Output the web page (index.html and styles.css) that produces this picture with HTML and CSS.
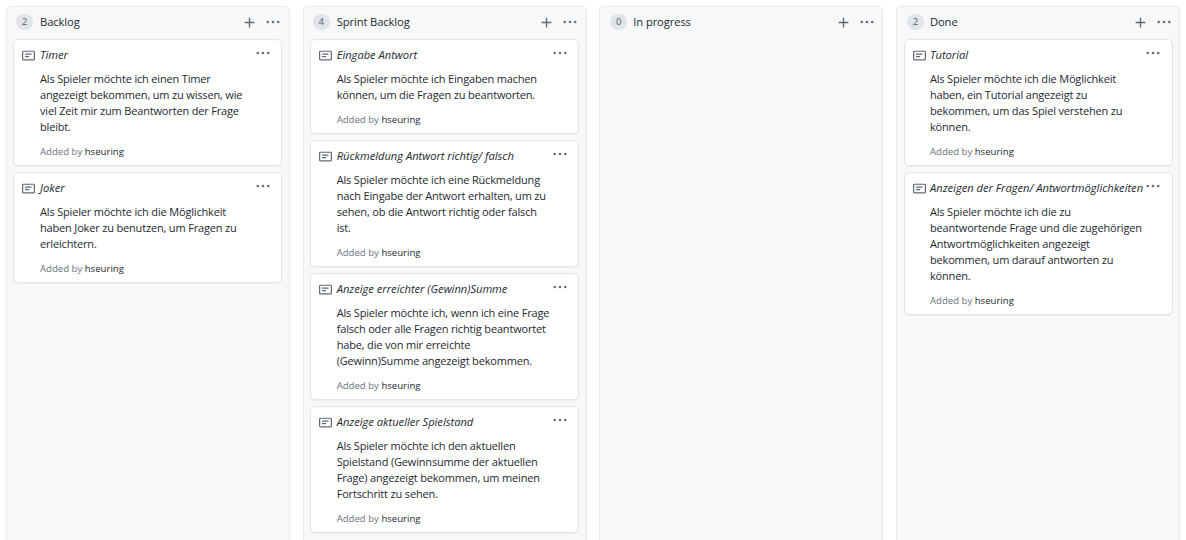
FILE: index.html
```
<!DOCTYPE html>
<html lang="de">
<head>
<meta charset="utf-8">
<title>Project board</title>
<link rel="stylesheet" href="styles.css">
</head>
<body>
<svg class="defs" aria-hidden="true">
  <symbol id="note" viewBox="0 0 16 16"><path fill-rule="evenodd" d="M0 3.75C0 2.784.784 2 1.75 2h12.5c.966 0 1.75.784 1.75 1.75v8.5A1.75 1.75 0 0 1 14.25 14H1.75A1.75 1.75 0 0 1 0 12.250v-8.500zm1.750-.250a.250.250 0 0 0-.250.250v8.500c0 .138.112.250.250.250h12.500a.250.250 0 0 0 .250-.250v-8.500a.250.250 0 0 0-.250-.250H1.750zM3.500 6.250a.750.750 0 0 1 .750-.750h7a.750.750 0 0 1 0 1.500h-7a.750.750 0 0 1-.750-.750zm.750 2.250a.750.750 0 0 0 0 1.500h4a.750.750 0 0 0 0-1.500h-4z"/></symbol>
  <symbol id="dots" viewBox="0 0 16 16"><circle cx="2" cy="8" r="1.400"/><circle cx="8" cy="8" r="1.400"/><circle cx="14" cy="8" r="1.400"/></symbol>
  <symbol id="plus" viewBox="0 0 16 16"><path d="M7.150 2h1.700v5.150H14v1.700H8.850V14h-1.700V8.850H2v-1.700h5.150z"/></symbol>
</svg>
<main class="board">
  <section class="column">
    <header class="head"><span class="count">2</span><h2>Backlog</h2><svg class="plus"><use href="#plus"/></svg><svg class="dots"><use href="#dots"/></svg></header>
    <article class="card"><svg class="note"><use href="#note"/></svg><svg class="dots"><use href="#dots"/></svg>
      <h3>Timer</h3>
      <p>Als Spieler möchte ich einen Timer<br>angezeigt bekommen, um zu wissen, wie<br>viel Zeit mir zum Beantworten der Frage<br>bleibt.</p>
      <small>Added by <b>hseuring</b></small></article>
    <article class="card"><svg class="note"><use href="#note"/></svg><svg class="dots"><use href="#dots"/></svg>
      <h3>Joker</h3>
      <p>Als Spieler möchte ich die Möglichkeit<br>haben Joker zu benutzen, um Fragen zu<br>erleichtern.</p>
      <small>Added by <b>hseuring</b></small></article>
  </section>
  <section class="column">
    <header class="head"><span class="count">4</span><h2>Sprint Backlog</h2><svg class="plus"><use href="#plus"/></svg><svg class="dots"><use href="#dots"/></svg></header>
    <article class="card"><svg class="note"><use href="#note"/></svg><svg class="dots"><use href="#dots"/></svg>
      <h3>Eingabe Antwort</h3>
      <p>Als Spieler möchte ich Eingaben machen<br>können, um die Fragen zu beantworten.</p>
      <small>Added by <b>hseuring</b></small></article>
    <article class="card"><svg class="note"><use href="#note"/></svg><svg class="dots"><use href="#dots"/></svg>
      <h3>Rückmeldung Antwort richtig/ falsch</h3>
      <p>Als Spieler möchte ich eine Rückmeldung<br>nach Eingabe der Antwort erhalten, um zu<br>sehen, ob die Antwort richtig oder falsch<br>ist.</p>
      <small>Added by <b>hseuring</b></small></article>
    <article class="card"><svg class="note"><use href="#note"/></svg><svg class="dots"><use href="#dots"/></svg>
      <h3>Anzeige erreichter (Gewinn)Summe</h3>
      <p>Als Spieler möchte ich, wenn ich eine Frage<br>falsch oder alle Fragen richtig beantwortet<br>habe, die von mir erreichte<br>(Gewinn)Summe angezeigt bekommen.</p>
      <small>Added by <b>hseuring</b></small></article>
    <article class="card"><svg class="note"><use href="#note"/></svg><svg class="dots"><use href="#dots"/></svg>
      <h3>Anzeige aktueller Spielstand</h3>
      <p>Als Spieler möchte ich den aktuellen<br>Spielstand (Gewinnsumme der aktuellen<br>Frage) angezeigt bekommen, um meinen<br>Fortschritt zu sehen.</p>
      <small>Added by <b>hseuring</b></small></article>
  </section>
  <section class="column">
    <header class="head"><span class="count">0</span><h2>In progress</h2><svg class="plus"><use href="#plus"/></svg><svg class="dots"><use href="#dots"/></svg></header>
  </section>
  <section class="column">
    <header class="head"><span class="count">2</span><h2>Done</h2><svg class="plus"><use href="#plus"/></svg><svg class="dots"><use href="#dots"/></svg></header>
    <article class="card"><svg class="note"><use href="#note"/></svg><svg class="dots"><use href="#dots"/></svg>
      <h3>Tutorial</h3>
      <p>Als Spieler möchte ich die Möglichkeit<br>haben, ein Tutorial angezeigt zu<br>bekommen, um das Spiel verstehen zu<br>können.</p>
      <small>Added by <b>hseuring</b></small></article>
    <article class="card"><svg class="note"><use href="#note"/></svg><svg class="dots"><use href="#dots"/></svg>
      <h3>Anzeigen der Fragen/ Antwortmöglichkeiten</h3>
      <p>Als Spieler möchte ich die zu<br>beantwortende Frage und die zugehörigen<br>Antwortmöglichkeiten angezeigt<br>bekommen, um darauf antworten zu<br>können.</p>
      <small>Added by <b>hseuring</b></small></article>
  </section>
</main>
</body>
</html>
```
FILE: styles.css
```
* { box-sizing: border-box; }
body { margin: 0; background: #fff; color: #24292e; font-family: "Open Sans", "Noto Sans", sans-serif; overflow: hidden; }
.defs { position: absolute; width: 0; height: 0; }
.board { display: flex; gap: 12.67px; height: 540px; padding: 6px 6px 0; overflow: hidden; }
.column { flex: 0 0 284px; height: 560px; padding: 0 7px 0 6px; background: #f6f8fa; border: 1px solid #e6e9ec; border-radius: 5px; }
.column:nth-child(n+3) { padding: 0 6px 0 7px; }
.head { display: flex; align-items: center; height: 32px; padding: 0 2px 2px 3px; }
.count { width: 17px; height: 16px; border-radius: 8px; background: #e1e4e8; color: #586069; font-size: 9.6px; line-height: 16px; text-align: center; }
h2 { flex: 1; margin: 0 0 0 7px; font-size: 11.2px; font-weight: 500; line-height: 16px; letter-spacing: -0.1px; white-space: nowrap; }
.column:nth-child(n+3) h2 { margin-left: 6px; }
svg { fill: #626a73; display: block; }
.head .plus { width: 13px; height: 13px; margin-right: 10px; }
.dots { width: 14px; height: 14px; }
.card { display: grid; grid-template-columns: 18px 1fr; position: relative; margin-bottom: 6px; padding: 7px 8px 5px; background: #fff; border: 1px solid #e1e4e8; border-radius: 5px; box-shadow: 0 1px 1px rgba(27,31,35,.04); }
.column:nth-child(n+3) .card { grid-template-columns: 17px 1fr; }
.note { width: 13px; height: 13px; margin-top: 2px; }
.card .dots { position: absolute; right: 11px; top: 6px; }
.column:nth-child(n+3) .card .dots { right: 12px; }
h3, p, small { grid-column: 2; white-space: nowrap; }
h3 { grid-row: 1; margin: 0; font-size: 11.2px; font-style: italic; font-weight: 400; line-height: 16px; letter-spacing: -0.03px; }
p { margin: 8px 0 9px; font-size: 11px; line-height: 16px; letter-spacing: -0.17px; }
small { font-size: 9.6px; line-height: 16px; color: #6a737d; }
b { font-weight: 400; color: #24292e; }
```
